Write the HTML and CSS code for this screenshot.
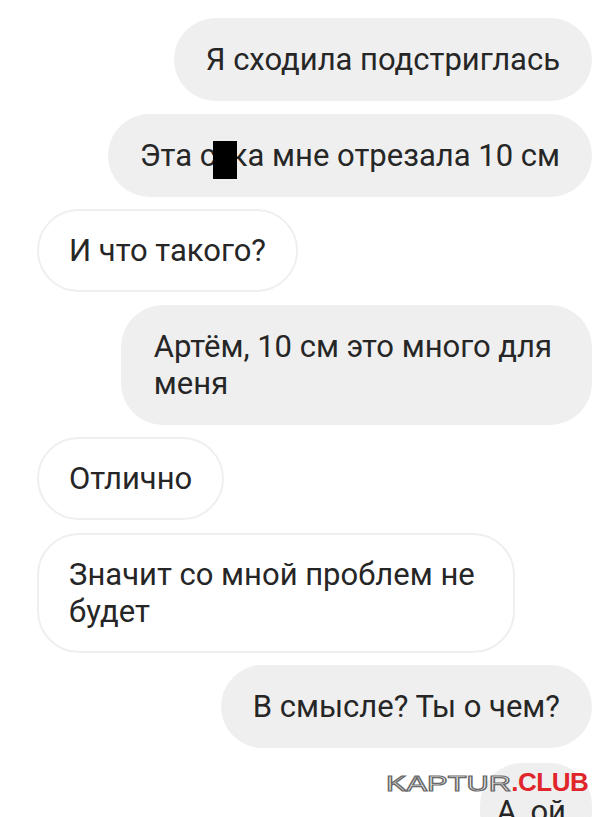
FILE: index.html
```html
<!DOCTYPE html>
<html lang="ru">
<head>
    <meta charset="UTF-8">
    <meta name="viewport" content="width=device-width, initial-scale=1.0">
    <title>Переписка</title>
    <link rel="stylesheet" href="styles.css">
</head>
<body>
    <div class="chat">
        <div class="msg out">Я сходила подстриглась</div>
        <div class="msg out">Эта с<span class="censor">у</span>ка мне отрезала 10 см</div>
        <div class="msg in">И что такого?</div>
        <div class="msg out wrapped">Артём, 10 см это много для<br>меня</div>
        <div class="msg in">Отлично</div>
        <div class="msg in wrapped">Значит со мной проблем не<br>будет</div>
        <div class="msg out">В смысле? Ты о чем?</div>
        <div class="msg out last">А, ой</div>
    </div>

    <div class="watermark"><span class="wm-kaptur">KAPTUR</span><span class="wm-club">.CLUB</span></div>
</body>
</html>
```

FILE: styles.css
```css
body {
    font-family: Roboto, "Noto Sans", Arial, sans-serif;
    background-color: #ffffff;
    margin: 0;
    padding: 0;
    height: 817px;
    overflow: hidden;
    position: relative;
}

.chat {
    display: flex;
    flex-direction: column;
    gap: 12.5px;
    padding: 18px 22px 0 37px;
}

.msg {
    font-size: 31px;
    line-height: 37px;
    color: #262626;
    padding: 23px 32px;
    border-radius: 42px;
    box-sizing: border-box;
}

.msg.out {
    align-self: flex-end;
    background-color: #efefef;
}

.msg.in {
    align-self: flex-start;
    background-color: #ffffff;
    border: 2px solid #efefef;
    padding: 21px 30px;
}

/* two-line messages keep some slack on the right */
.msg.out.wrapped {
    padding-left: 33px;
    padding-right: 40px;
}

.msg.in.wrapped {
    padding-right: 38px;
}

/* short message: bubble sits a bit lower and narrower */
.msg.last {
    margin-top: 2px;
    padding: 30px 26px 23px 16px;
}

.censor {
    position: relative;
}

.censor::after {
    content: "";
    position: absolute;
    left: -3px;
    top: 4px;
    width: 24px;
    height: 38px;
    background-color: #000;
}

.watermark {
    position: absolute;
    left: 386px;
    top: 767px;
    font-family: "Liberation Sans", Arial, sans-serif;
    display: flex;
    align-items: baseline;
}

.wm-kaptur {
    display: inline-block;
    font-size: 22px;
    color: #ffffff;
    -webkit-text-stroke: 1.2px #6a6a6a;
    transform: scaleX(1.4);
    transform-origin: left;
    margin-right: 36px;
}

.wm-club {
    font-size: 26px;
    font-weight: bold;
    color: #e0262b;
    letter-spacing: -0.5px;
}
```
